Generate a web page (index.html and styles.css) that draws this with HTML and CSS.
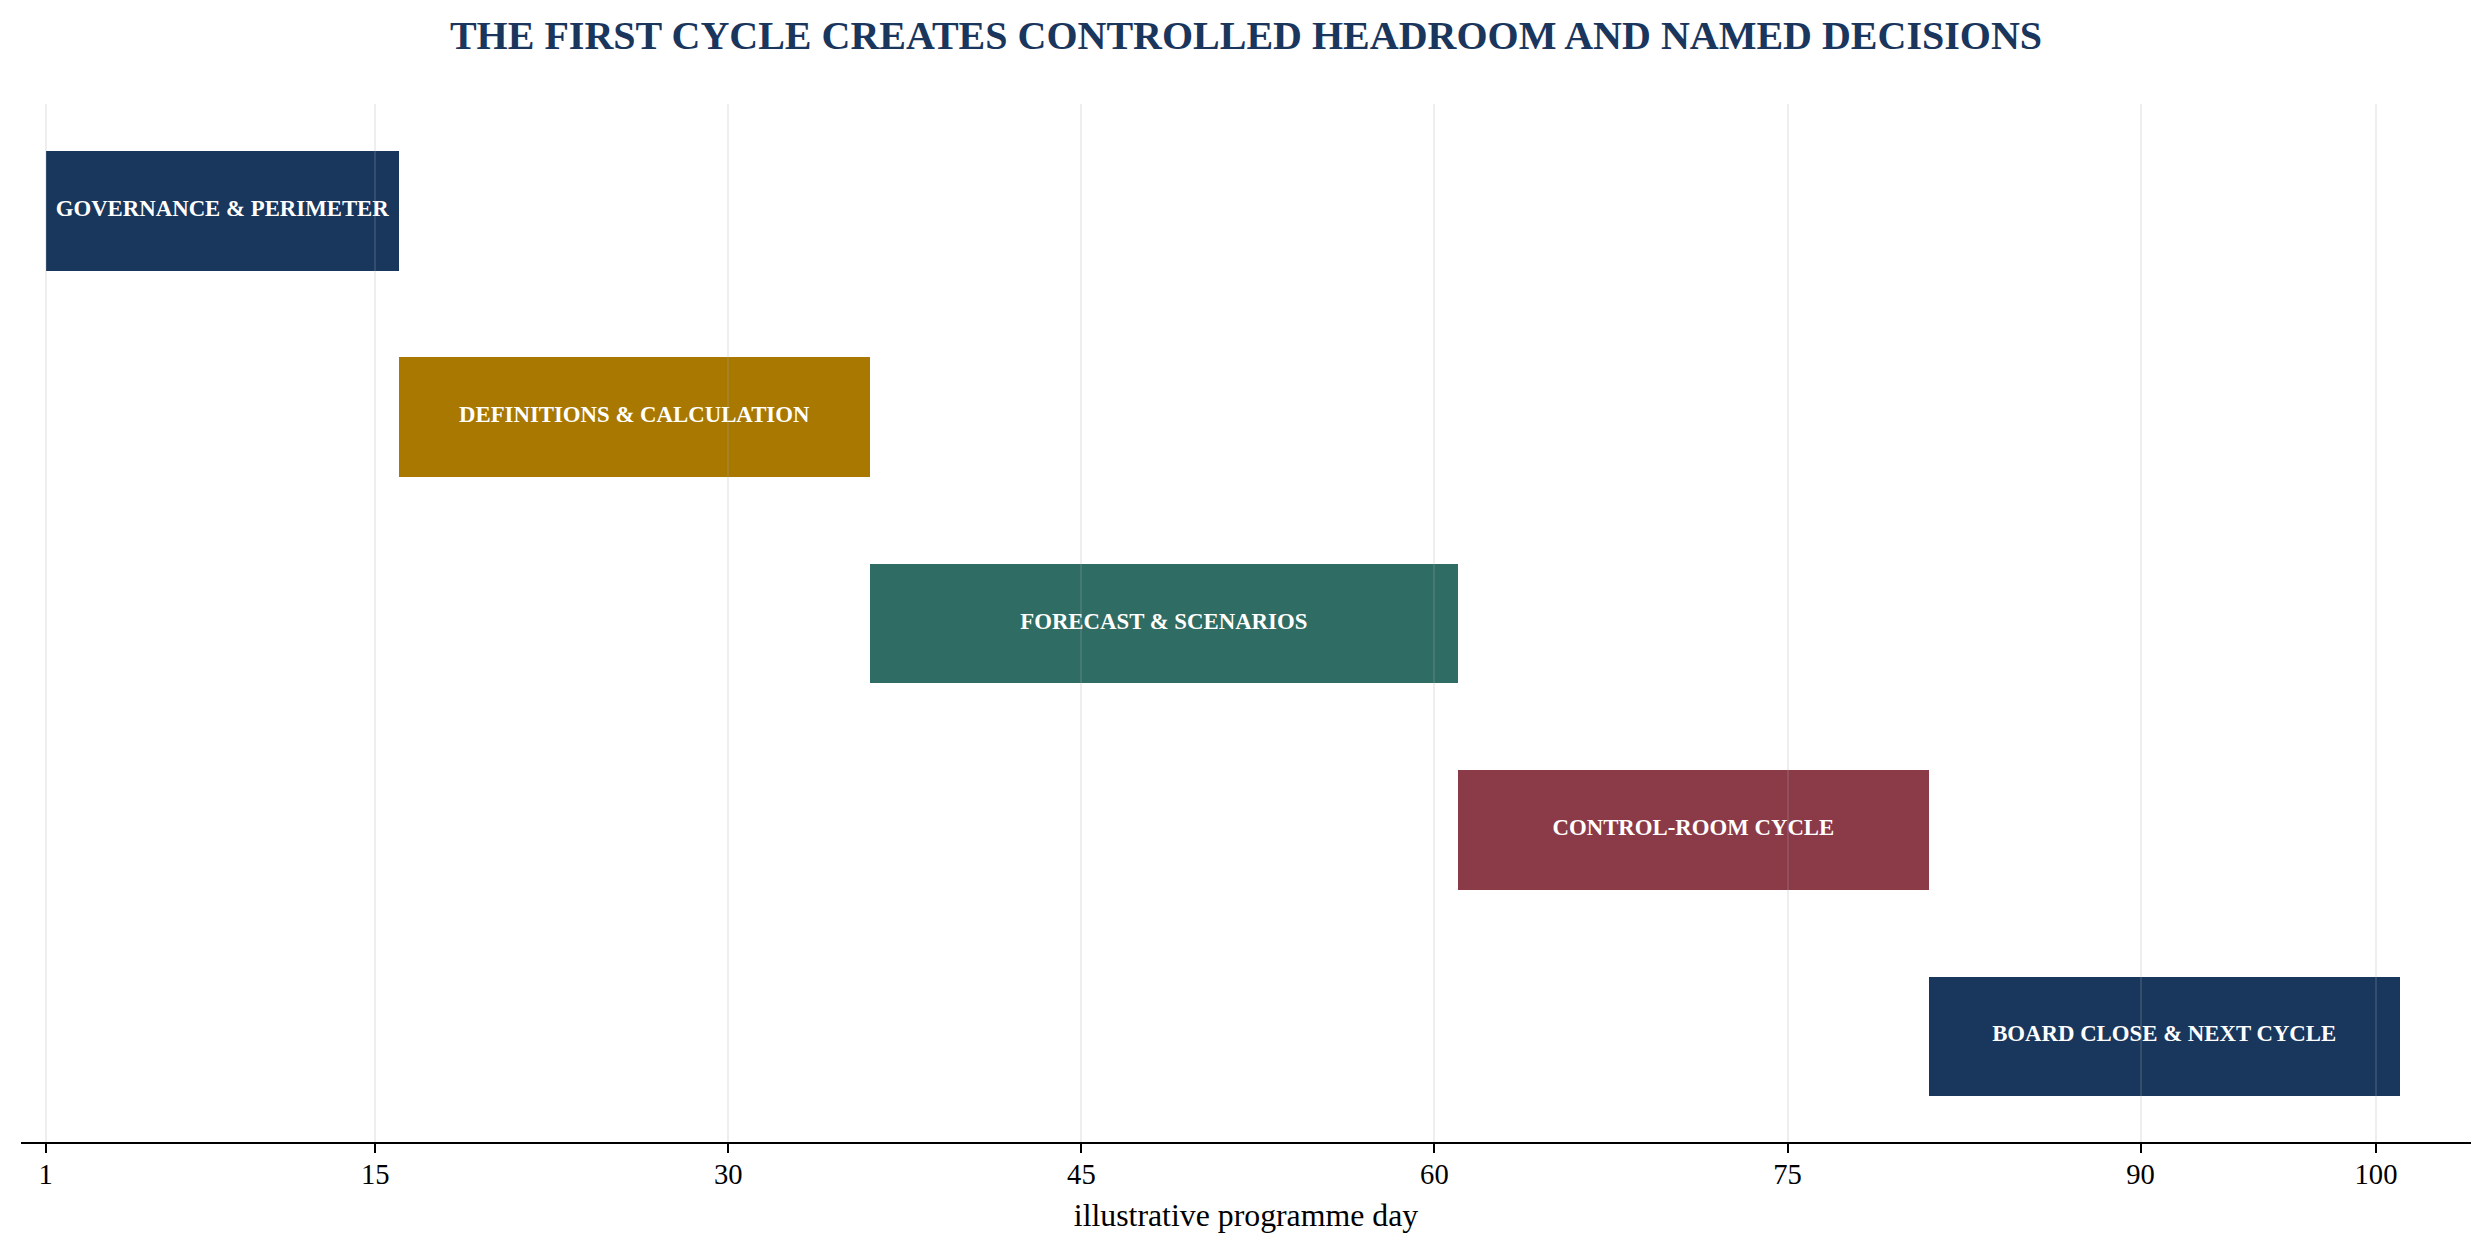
FILE: index.html
```html
<!DOCTYPE html>
<html lang="en">
<head>
<meta charset="utf-8">
<title>The first cycle creates controlled headroom and named decisions</title>
<link rel="stylesheet" href="styles.css">
</head>
<body>
<div class="chart">
  <h1 class="title">THE FIRST CYCLE CREATES CONTROLLED HEADROOM AND NAMED DECISIONS</h1>
  <div class="plot">
    <div class="rows">
      <div class="row"><div class="bar navy" style="margin-left:24.7px;width:353.1px"><span>GOVERNANCE &amp; PERIMETER</span></div></div>
      <div class="row"><div class="bar gold" style="margin-left:377.8px;width:470.8px"><span>DEFINITIONS &amp; CALCULATION</span></div></div>
      <div class="row"><div class="bar teal" style="margin-left:848.6px;width:588.4px"><span>FORECAST &amp; SCENARIOS</span></div></div>
      <div class="row"><div class="bar maroon" style="margin-left:1437px;width:470.8px"><span>CONTROL-ROOM CYCLE</span></div></div>
      <div class="row"><div class="bar navy" style="margin-left:1907.8px;width:470.8px"><span>BOARD CLOSE &amp; NEXT CYCLE</span></div></div>
    </div>
    <div class="grid">
      <i class="gridline" style="left:24.7px"></i>
      <i class="gridline" style="left:354.2px"></i>
      <i class="gridline" style="left:707.3px"></i>
      <i class="gridline" style="left:1060.4px"></i>
      <i class="gridline" style="left:1413.4px"></i>
      <i class="gridline" style="left:1766.5px"></i>
      <i class="gridline" style="left:2119.6px"></i>
      <i class="gridline" style="left:2355px"></i>
    </div>
  </div>
  <div class="axis">
    <div class="tick" style="left:24.7px"><span class="mark"></span><span class="label">1</span></div>
    <div class="tick" style="left:354.2px"><span class="mark"></span><span class="label">15</span></div>
    <div class="tick" style="left:707.3px"><span class="mark"></span><span class="label">30</span></div>
    <div class="tick" style="left:1060.4px"><span class="mark"></span><span class="label">45</span></div>
    <div class="tick" style="left:1413.4px"><span class="mark"></span><span class="label">60</span></div>
    <div class="tick" style="left:1766.5px"><span class="mark"></span><span class="label">75</span></div>
    <div class="tick" style="left:2119.6px"><span class="mark"></span><span class="label">90</span></div>
    <div class="tick" style="left:2355px"><span class="mark"></span><span class="label">100</span></div>
  </div>
  <div class="xlabel">illustrative programme day</div>
</div>
</body>
</html>
```

FILE: styles.css
```css
html, body {
  margin: 0;
  padding: 0;
  background: #ffffff;
}

body {
  font-family: "Liberation Serif", "Times New Roman", serif;
  color: #000000;
}

.chart {
  width: 2492px;
  height: 1253px;
  overflow: hidden;
}

.title {
  margin: 0;
  padding-top: 16px;
  height: 40px;
  font-size: 40px;
  line-height: 40px;
  font-weight: 700;
  color: #1a365d;
  text-align: center;
  white-space: nowrap;
}

.plot {
  position: relative;
  margin-top: 48px;
  margin-left: 21px;
  width: 2450px;
  height: 1038px;
}

.rows {
  display: flex;
  flex-direction: column;
  gap: 86.8px;
  padding-top: 47px;
}

.row {
  display: flex;
  height: 119.6px;
}

.bar {
  box-sizing: border-box;
  height: 100%;
  display: flex;
  align-items: center;
  justify-content: center;
  padding-bottom: 3px;
  color: #ffffff;
  font-size: 22.8px;
  font-weight: 700;
  line-height: 1;
  white-space: nowrap;
}

.navy { background: #19365d; }
.gold { background: #a87800; }
.teal { background: #2f6c63; }
.maroon { background: #8b3a48; }

.grid {
  position: absolute;
  inset: 0;
  pointer-events: none;
}

.gridline {
  position: absolute;
  top: 0;
  bottom: 0;
  width: 2px;
  margin-left: -1px;
  background: rgba(170, 170, 170, 0.2);
}

.axis {
  position: relative;
  margin-left: 21px;
  width: 2450px;
  height: 48px;
  border-top: 2px solid #000000;
}

.tick {
  position: absolute;
  top: 0;
  width: 0;
  display: flex;
  flex-direction: column;
  align-items: center;
}

.mark {
  display: block;
  width: 2px;
  height: 9px;
  background: #000000;
}

.label {
  display: block;
  margin-top: 8px;
  font-size: 28.6px;
  line-height: 28.6px;
  white-space: nowrap;
}

.xlabel {
  margin-top: 8px;
  margin-left: 21px;
  width: 2450px;
  text-align: center;
  font-size: 31.8px;
  line-height: 31.8px;
  white-space: nowrap;
}
```
